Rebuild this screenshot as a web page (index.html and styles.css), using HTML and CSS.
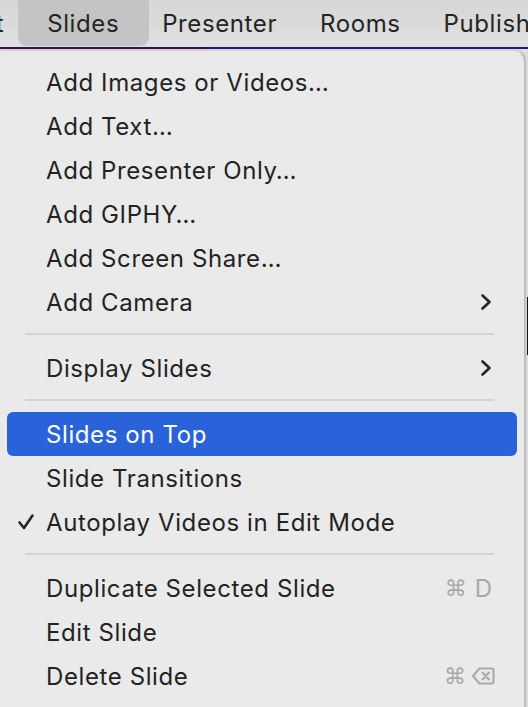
FILE: index.html
```html
<!DOCTYPE html>
<html lang="en">
<head>
<meta charset="utf-8">
<title>Slides menu</title>
<link rel="stylesheet" href="styles.css">
</head>
<body>
<div class="menubar">
  <span class="bar-item cut">Edit</span>
  <span class="bar-item active">Slides</span>
  <span class="bar-item">Presenter</span>
  <span class="bar-item">Rooms</span>
  <span class="bar-item">Publish</span>
</div>
<div class="rule"><span class="rule-a"></span><span class="rule-b"></span></div>
<div class="stage">
  <div class="menu">
    <div class="item"><span class="label">Add Images or Videos…</span></div>
    <div class="item"><span class="label">Add Text…</span></div>
    <div class="item"><span class="label">Add Presenter Only…</span></div>
    <div class="item"><span class="label">Add GIPHY…</span></div>
    <div class="item"><span class="label">Add Screen Share…</span></div>
    <div class="item"><span class="label">Add Camera</span>
      <svg class="chev" viewBox="0 0 14 20" width="14" height="20"><path d="M3.5 3.5 L10.5 10 L3.5 16.5" fill="none" stroke="#262626" stroke-width="2.6" stroke-linecap="round" stroke-linejoin="round"/></svg>
    </div>
    <div class="sep"></div>
    <div class="item"><span class="label">Display Slides</span>
      <svg class="chev" viewBox="0 0 14 20" width="14" height="20"><path d="M3.5 3.5 L10.5 10 L3.5 16.5" fill="none" stroke="#262626" stroke-width="2.6" stroke-linecap="round" stroke-linejoin="round"/></svg>
    </div>
    <div class="sep"></div>
    <div class="item selected"><span class="label">Slides on Top</span></div>
    <div class="item"><span class="label">Slide Transitions</span></div>
    <div class="item">
      <svg class="check" viewBox="0 0 18 18" width="18" height="18"><path d="M2.5 9.5 L7 15 L15.5 2.5" fill="none" stroke="#262626" stroke-width="2.6" stroke-linecap="round" stroke-linejoin="round"/></svg>
      <span class="label">Autoplay Videos in Edit Mode</span></div>
    <div class="sep"></div>
    <div class="item"><span class="label">Duplicate Selected Slide</span>
      <span class="shortcut"><span class="cmd">⌘</span><span class="key">D</span></span>
    </div>
    <div class="item"><span class="label">Edit Slide</span></div>
    <div class="item"><span class="label">Delete Slide</span>
      <span class="shortcut del-short"><span class="cmd">⌘</span>
        <svg class="del" viewBox="0 0 24 20" width="24" height="20"><path d="M8.5 2.5 H21 Q22.5 2.5 22.5 4 V16 Q22.5 17.5 21 17.5 H8.5 L2 10 Z" fill="none" stroke="#a9a9a9" stroke-width="2" stroke-linejoin="round"/><path d="M11.5 6.5 L18 13.5 M18 6.5 L11.5 13.5" stroke="#a9a9a9" stroke-width="2" stroke-linecap="round"/></svg>
      </span>
    </div>
  </div>
  <div class="backdrop"><span class="edge"></span></div>
</div>
</body>
</html>
```

FILE: styles.css
```css
html, body {
  margin: 0;
  padding: 0;
}
body {
  width: 528px;
  height: 707px;
  overflow: hidden;
  background: #e9e9e9;
  font-family: Inter, "Noto Sans", "Liberation Sans", sans-serif;
  color: #232323;
}
.menubar {
  height: 47px;
  display: flex;
  align-items: center;
  gap: 43px;
  background: linear-gradient(#d6d6d6, #e0e0e0);
  font-size: 24px;
  letter-spacing: 0.6px;
  white-space: nowrap;
  overflow: hidden;
  padding-bottom: 1px;
  box-sizing: border-box;
}
.bar-item {
  position: relative;
  color: #242424;
  line-height: 47px;
}
.bar-item.cut {
  margin-left: -41px;
}
.bar-item.active::before {
  content: "";
  position: absolute;
  top: -6px;
  bottom: 1px;
  left: -29px;
  right: -30px;
  background: #c4c4c4;
  border-radius: 0 0 9px 9px;
  z-index: -1;
}
.bar-item.active {
  z-index: 0;
}
.rule {
  display: flex;
  height: 2px;
}
.rule-a {
  width: 204px;
  background: #3a1050;
}
.rule-b {
  flex: 1;
  background: #1c1890;
}
.stage {
  display: flex;
  height: 658px;
  background: #dedede;
  padding-top: 1px;
}
.menu {
  width: 525px;
  flex: none;
  box-sizing: border-box;
  background: #eaeaea;
  border-right: 1px solid #b9b9b9;
  border-top: 1px solid #d2d2d2;
  border-top-right-radius: 11px;
  padding: 9px 7px 0 0;
  box-shadow: 1px 0 2px rgba(0,0,0,0.15);
}
.backdrop {
  flex: 1;
  display: flex;
  justify-content: flex-end;
  padding-top: 247px;
}
.edge {
  width: 1px;
  height: 58px;
  background: #151525;
}
.item {
  height: 44px;
  margin-left: 7px;
  display: flex;
  align-items: center;
  position: relative;
  padding-left: 39px;
  padding-right: 24px;
  border-radius: 6px;
  font-size: 24px;
  letter-spacing: 0.6px;
}
.item.selected {
  background: #2a63d9;
  color: #ffffff;
}
.label {
  flex: 1;
  white-space: nowrap;
}
.chev {
  flex: none;
}
.check {
  position: absolute;
  left: 10px;
  top: 13px;
}
.sep {
  height: 2px;
  background: #d3d3d3;
  margin: 9px 23px 11px 25px;
}
.shortcut {
  display: flex;
  align-items: center;
  gap: 8px;
  color: #a9a9a9;
  margin-right: 1px;
  letter-spacing: 0;
}
.del-short {
  gap: 5px;
  margin-right: -2px;
}
.cmd {
  font-family: "DejaVu Sans", sans-serif;
  font-size: 22px;
}
.key {
  font-size: 24px;
}
.del {
  display: block;
}
```
